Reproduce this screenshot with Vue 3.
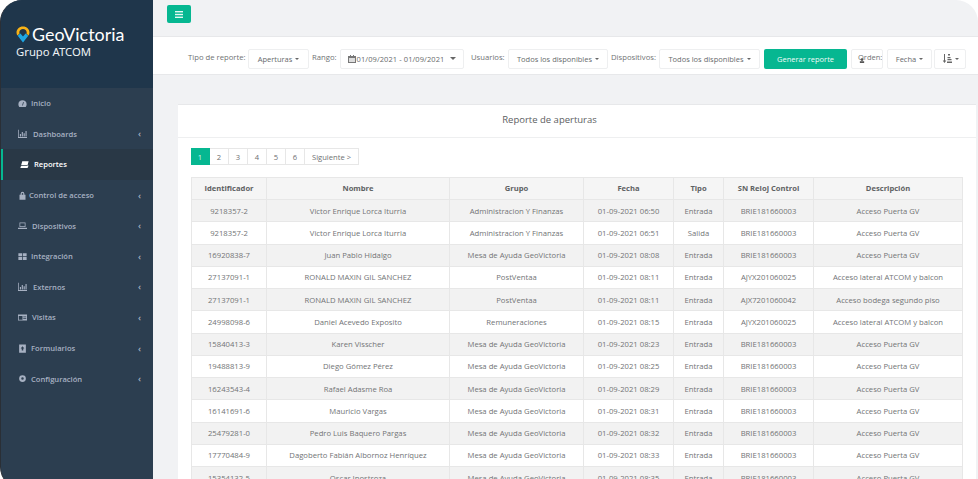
<script setup>
const menu = [
  { label: 'Inicio', icon: 'gauge', arrow: false, gap: 4 },
  { label: 'Dashboards', icon: 'chart', arrow: true, gap: 6 },
  { label: 'Reportes', icon: 'files', arrow: false, active: true, gap: 5 },
  { label: 'Control de acceso', icon: 'lock', arrow: true, gap: 2 },
  { label: 'Dispositivos', icon: 'laptop', arrow: true, gap: 5 },
  { label: 'Integración', icon: 'grid', arrow: true, gap: 4 },
  { label: 'Externos', icon: 'chart', arrow: true, gap: 6 },
  { label: 'Visitas', icon: 'card', arrow: true, gap: 5 },
  { label: 'Formularios', icon: 'form', arrow: true, gap: 4 },
  { label: 'Configuración', icon: 'gear', arrow: true, gap: 4 }
]

const pages = ['1', '2', '3', '4', '5', '6', 'Siguiente >']
const columns = ['Identificador', 'Nombre', 'Grupo', 'Fecha', 'Tipo', 'SN Reloj Control', 'Descripción']

const mesa = 'Mesa de Ayuda GeoVictoria'
const admin = 'Administracion Y Finanzas'
const brie = 'BRIE181660003'
const puerta = 'Acceso Puerta GV'
const lateral = 'Acceso lateral ATCOM y balcon'

const rows = [
  ['9218357-2', 'Victor Enrique Lorca Iturria', admin, '01-09-2021 06:50', 'Entrada', brie, puerta],
  ['9218357-2', 'Victor Enrique Lorca Iturria', admin, '01-09-2021 06:51', 'Salida', brie, puerta],
  ['16920838-7', 'Juan Pablo Hidalgo', mesa, '01-09-2021 08:08', 'Entrada', brie, puerta],
  ['27137091-1', 'RONALD MAXIN GIL SANCHEZ', 'PostVentaa', '01-09-2021 08:11', 'Entrada', 'AJYX201060025', lateral],
  ['27137091-1', 'RONALD MAXIN GIL SANCHEZ', 'PostVentaa', '01-09-2021 08:11', 'Entrada', 'AJX7201060042', 'Acceso bodega segundo piso'],
  ['24998098-6', 'Daniel Acevedo Exposito', 'Remuneraciones', '01-09-2021 08:15', 'Entrada', 'AJYX201060025', lateral],
  ['15840413-3', 'Karen Visscher', mesa, '01-09-2021 08:23', 'Entrada', brie, puerta],
  ['19488813-9', 'Diego Gómez Pérez', mesa, '01-09-2021 08:25', 'Entrada', brie, puerta],
  ['16243543-4', 'Rafael Adasme Roa', mesa, '01-09-2021 08:29', 'Entrada', brie, puerta],
  ['16141691-6', 'Mauricio Vargas', mesa, '01-09-2021 08:31', 'Entrada', brie, puerta],
  ['25479281-0', 'Pedro Luis Baquero Pargas', mesa, '01-09-2021 08:32', 'Entrada', brie, puerta],
  ['17770484-9', 'Dagoberto Fabián Albornoz Henríquez', mesa, '01-09-2021 08:33', 'Entrada', brie, puerta],
  ['15354132-5', 'Oscar Inostroza', mesa, '01-09-2021 08:35', 'Entrada', brie, puerta]
]
</script>

<template>
  <div class="page">
    <aside class="sidebar">
      <div class="brand">
        <div class="logo">
          <svg width="14" height="17" viewBox="0 0 14 17">
            <path d="M7 0.5C3.2 0.5 0.5 3.2 0.5 6.4c0 1.3 0.4 2.3 1 3.1L3.6 7.4A3.7 3.7 0 0 1 3.3 6.4C3.3 4.5 5 3 7 3s3.7 1.5 3.7 3.4c0 .4-.1.7-.3 1l2.1 2.1c.6-.8 1-1.8 1-3.1C13.500 3.200 10.800 .5 7 .5z" fill="#f7b217" />
            <path d="M1.700 9.800 7 16.500l5.300-6.700L9.600 7.600 7 10.500 4.400 7.600z" fill="#1ea7e4" />
          </svg>
          <span class="logo-text">GeoVictoria</span>
        </div>
        <div class="company">Grupo ATCOM</div>
      </div>
      <nav class="menu">
        <a v-for="item in menu" :key="item.label" class="menu-item" :class="{ active: item.active }">
          <svg class="menu-icon" width="9" height="9" viewBox="0 0 12 12" fill="currentColor" :style="{ marginRight: item.gap + 'px' }">
            <path v-if="item.icon === 'gauge'" d="M6 1.500a5.500 5.500 0 0 0-5.500 5.500c0 1.300.4 2.500 1.200 3.500h8.600c.8-1 1.200-2.200 1.200-3.500A5.500 5.500 0 0 0 6 1.500zM6.500 8.800 5.500 8.500 6.800 4l1 .3z" />
            <path v-else-if="item.icon === 'chart'" d="M0 1h1v9.800h11V12H0zM2.500 6.500h1.500v3.500H2.500zM5 4h1.500v6H5zM7.500 5.500H9V10H7.500zM10 2.500h1.500V10H10z" />
            <path v-else-if="item.icon === 'files'" d="M3 1.500h8.500L10 7H1.500zM1.800 8H9.500L11 6.500V8.500l-1 2H.5L1 8.500z" />
            <path v-else-if="item.icon === 'lock'" d="M3.500 5V3.500a2.500 2.500 0 0 1 5 0V5H10v6.500H2V5zM5 5h2V3.500a1 1 0 0 0-2 0z" />
            <path v-else-if="item.icon === 'laptop'" d="M2 2h8v6H2zM3 3v4h6V3zM0 9h12v1.500H0z" fill-rule="evenodd" />
            <path v-else-if="item.icon === 'grid'" d="M.5 1.500h5v4h-5zM6.500 1.500h5v4h-5zM.5 6.500h5v4h-5zM6.500 6.500h5v4h-5z" />
            <path v-else-if="item.icon === 'card'" d="M0 2h12v8H0zM1 4v5h5V4zM7 4.500v1h4v-1zM7 6.500v1h4v-1z" fill-rule="evenodd" />
            <path v-else-if="item.icon === 'form'" d="M1.500 .5h9v11h-9zM6 3 3.500 6h1.500v2.500h2V6h1.500z" fill-rule="evenodd" />
            <path v-else d="M6 1.500a4.500 4.500 0 1 0 0 9 4.500 4.500 0 0 0 0-9zM6 4.300a1.700 1.700 0 1 1 0 3.400 1.700 1.700 0 0 1 0-3.400z" fill-rule="evenodd" />
          </svg>
          <span class="menu-label">{{ item.label }}</span>
          <span v-if="item.arrow" class="menu-arrow">‹</span>
        </a>
      </nav>
    </aside>

    <main class="main">
      <div class="topbar">
        <button class="toggle">
          <svg width="8" height="7" viewBox="0 0 8 7" fill="#e6f7f3">
            <rect width="8" height="1.400" /><rect y="2.800" width="8" height="1.400" /><rect y="5.600" width="8" height="1.400" />
          </svg>
        </button>
      </div>

      <div class="filters">
        <label class="flabel l-tipo">Tipo de reporte:</label>
        <button class="fbtn w-tipo">Aperturas <i class="caret"></i></button>
        <label class="flabel l-rango">Rango:</label>
        <button class="fbtn w-rango">
          <svg width="8" height="8" viewBox="0 0 8 8" fill="#777"><path d="M0 1h8v7H0zM1 3v4h6V3z" fill-rule="evenodd" /><path d="M2 0h1v2H2zM5 0h1v2H5zM1.500 3.500h1v1h-1zM3.500 3.500h1v1h-1zM5.500 3.500h1v1h-1zM1.500 5.500h1v1h-1zM3.500 5.500h1v1h-1zM5.500 5.500h1v1h-1z" /></svg>
          <span>01/09/2021 - 01/09/2021</span> <i class="caret big"></i>
        </button>
        <label class="flabel l-users">Usuarios:</label>
        <button class="fbtn w-users">Todos los disponibles <i class="caret"></i></button>
        <label class="flabel l-disp">Dispositivos:</label>
        <button class="fbtn w-disp">Todos los disponibles <i class="caret"></i></button>
        <button class="generate">Generar reporte</button>
        <div class="orden">
          <span>Orden:</span>
          <svg class="orden-mark" width="6" height="5" viewBox="0 0 8 7" fill="#555"><circle cx="4" cy="2.200" r="2" /><rect x="1" y="4.500" width="6" height="2.500" /></svg>
        </div>
        <button class="fbtn w-fecha">Fecha <i class="caret"></i></button>
        <button class="fbtn w-sort">
          <svg width="10" height="9" viewBox="0 0 10 9" fill="#666"><path d="M2 0h1v6.500h1.300L2.500 9 .7 6.500H2zM6 0h2v1.500H6zM5.500 3h3v1.300h-3zM5.500 5h4v1.200h-4zM5 7.500h5V9H5z" /></svg>
          <i class="caret"></i>
        </button>
      </div>

      <section class="card">
        <h2 class="card-title">Reporte de aperturas</h2>
        <div class="card-body">
          <div class="pagination">
            <span v-for="(p, i) in pages" :key="p" class="page-link" :class="{ current: i === 0, next: i === 6 }">{{ p }}</span>
          </div>
          <table class="report">
            <colgroup>
              <col style="width: 75px" /><col style="width: 183px" /><col style="width: 134px" /><col style="width: 90px" />
              <col style="width: 50px" /><col style="width: 90px" /><col style="width: 149px" />
            </colgroup>
            <thead>
              <tr><th v-for="c in columns" :key="c">{{ c }}</th></tr>
            </thead>
            <tbody>
              <tr v-for="(row, r) in rows" :key="r">
                <td v-for="(cell, c) in row" :key="c">{{ cell }}</td>
              </tr>
            </tbody>
          </table>
        </div>
      </section>
    </main>
  </div>
</template>

<style>
html, body { margin: 0; background: #fff; }
</style>

<style scoped>
.page {
  display: grid;
  grid-template-columns: 153px 1fr;
  width: 978px;
  height: 479px;
  overflow: hidden;
  font-family: "Open Sans", "Liberation Sans", sans-serif;
  color: #676a6c;
  background: #fff;
}

.sidebar {
  display: flex;
  flex-direction: column;
  background: #2c3e50;
  border-left: 1px solid #2a2f36;
  border-radius: 22px 0 0 22px;
  overflow: hidden;
}
.brand {
  height: 88px;
  box-sizing: border-box;
  padding: 25px 0 0 15px;
  background: #1f364b;
  color: #fff;
}
.logo {
  display: flex;
  align-items: center;
  gap: 2px;
  height: 18px;
}
.logo-text {
  font-family: Lato, sans-serif;
  font-size: 17.900px;
  line-height: 18px;
}
.company {
  font-family: "Noto Sans", sans-serif;
  font-size: 11.300px;
  line-height: 14px;
  margin-top: 1.500px;
  color: #eef2f5;
}
.menu {
  display: flex;
  flex-direction: column;
}
.menu-item {
  position: relative;
  display: flex;
  align-items: center;
  height: 30.600px;
  padding: 0 12px 0 17px;
  font-size: 7.600px;
  font-weight: 600;
  color: #a7b1c2;
}
.menu-icon { flex: none; }
.menu-label { flex: 1; }
.menu-arrow { font-size: 9px; line-height: 9px; }
.menu-item.active {
  background: #293846;
  color: #fff;
  padding-left: 19px;
  box-shadow: inset 2px 0 0 #06b791;
}

.main {
  display: flex;
  flex-direction: column;
  background: #f1f2f4;
  border-top-right-radius: 22px;
  min-width: 0;
}
.topbar {
  height: 37px;
  box-sizing: border-box;
  padding: 5px 0 0 14px;
  border-bottom: 1px solid #e7e8ea;
}
.toggle {
  display: flex;
  align-items: center;
  justify-content: center;
  width: 24px;
  height: 18px;
  padding: 0;
  border: none;
  border-radius: 2px;
  background: #06b791;
}

.filters {
  display: flex;
  align-items: center;
  height: 38px;
  box-sizing: border-box;
  padding: 6px 0 0 35px;
  background: #fff;
  border-bottom: 1px solid #e7e8ea;
  font-size: 7.500px;
}
.flabel {
  flex: none;
  margin-top: -3px;
  font-size: 7.700px;
  white-space: nowrap;
  color: #707274;
}
.l-tipo { width: 57px; margin-right: 3px; }
.l-rango { width: 24px; margin: -3px 4px 0 3px; }
.l-users { width: 33px; margin: -3px 4px 0 7px; }
.l-disp { width: 45px; margin: -3px 3px 0 3px; }
.fbtn {
  flex: none;
  display: flex;
  align-items: center;
  justify-content: center;
  gap: 3px;
  height: 20px;
  padding: 0;
  box-sizing: border-box;
  background: #fff;
  border: 1px solid #eeeff0;
  border-radius: 2px;
  font: inherit;
  color: #676a6c;
  white-space: nowrap;
}
.w-tipo { width: 61px; }
.w-rango { width: 124px; gap: 1px; letter-spacing: 0.08px; }
.w-users { width: 100px; }
.w-disp { width: 101px; }
.w-fecha { width: 45px; margin-left: 4px; }
.w-sort { width: 32px; margin-left: 2px; }
.caret {
  display: inline-block;
  border-top: 2px solid #666;
  border-left: 2px solid transparent;
  border-right: 2px solid transparent;
}
.caret.big {
  margin-left: 5px;
  border-top-width: 3px;
  border-left-width: 3px;
  border-right-width: 3px;
}
.generate {
  flex: none;
  width: 83px;
  height: 20px;
  margin-left: 4px;
  padding: 0;
  border: none;
  border-radius: 2px;
  background: #06b791;
  color: #f2fbf8;
  font: inherit;
  font-weight: 500;
}
.orden {
  flex: none;
  position: relative;
  width: 32px;
  height: 20px;
  box-sizing: border-box;
  margin-left: 4px;
  padding: 0 0 0 6px;
  border: 1px solid #eeeff0;
  border-radius: 2px;
  line-height: 15px;
  overflow: hidden;
  white-space: nowrap;
  color: #707274;
}
.orden-mark {
  position: absolute;
  left: 7px;
  top: 8px;
}

.card {
  margin: 29px 2px 0 25px;
  flex: 1;
  min-height: 0;
  background: #fff;
  border-top: 1px solid #e7e8ea;
  overflow: hidden;
}
.card-title {
  height: 32px;
  margin: 0;
  padding-right: 55px;
  border-bottom: 1px solid #eeeff0;
  font-size: 9.500px;
  font-weight: 400;
  line-height: 30px;
  text-align: center;
  color: #5d6062;
}
.card-body { padding: 10px 13px 0; }

.pagination {
  display: flex;
  height: 17px;
  font-size: 7.600px;
}
.page-link {
  display: flex;
  align-items: center;
  justify-content: center;
  width: 19px;
  box-sizing: border-box;
  border: 1px solid #e7e7e7;
  border-left: none;
  color: #6e7072;
}
.page-link.current {
  background: #06b791;
  border-color: #06b791;
  color: #d6f3ec;
}
.page-link.next { width: 54px; }

.report {
  width: 771px;
  margin-top: 12px;
  border-collapse: collapse;
  table-layout: fixed;
  font-size: 7.700px;
}
.report th {
  height: 20px;
  padding: 0 0 1px;
  background: #f5f5f5;
  border: 1px solid #e7e7e7;
  font-size: 7.600px;
  font-weight: 700;
  color: #5e6163;
}
.report td {
  height: 21.250px;
  padding: 0;
  border: 1px solid #e7e7e7;
  border-top: none;
  text-align: center;
  white-space: nowrap;
  overflow: hidden;
  color: #727476;
}
.report tbody tr:nth-child(odd) td { background: #f2f2f2; }
</style>
